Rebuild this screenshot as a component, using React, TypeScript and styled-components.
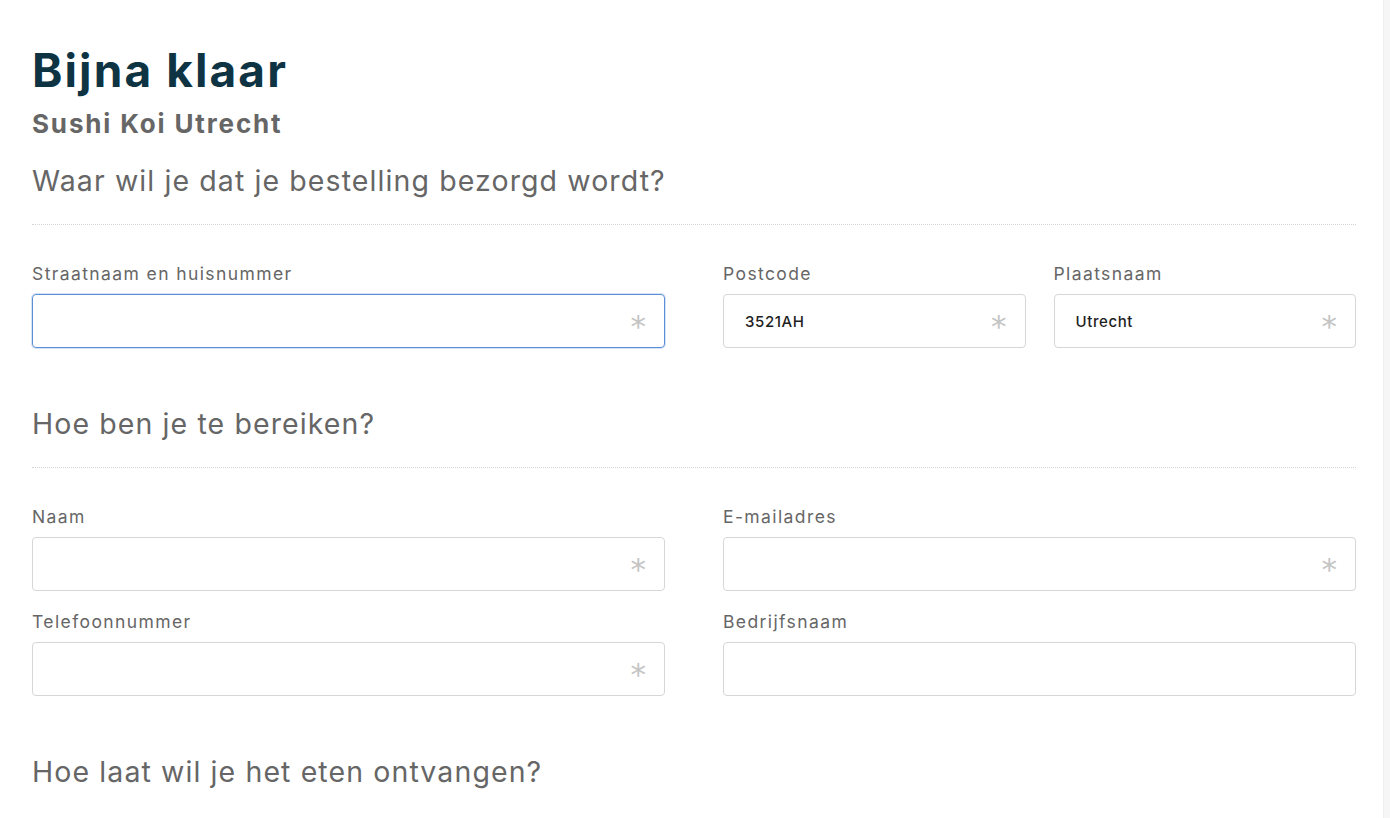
import React from 'react'
import styled, { createGlobalStyle } from 'styled-components'

const GlobalStyle = createGlobalStyle`
  html, body {
    margin: 0;
    padding: 0;
    background: #fff;
  }
  body {
    font-family: Inter, "Open Sans", sans-serif;
    overflow: hidden;
  }
`

const Shell = styled.div`
  display: flex;
  height: 818px;
`

const Main = styled.main`
  flex: 1;
  padding: 40px 27px 0 32px;
`

const ScrollTrack = styled.div`
  width: 6px;
  background: #f6f6f6;
  border-left: 1px solid #f0f0f0;
`

const Title = styled.h1`
  margin: 0;
  font-size: 46px;
  line-height: 60px;
  font-weight: 700;
  color: #0e3443;
  letter-spacing: 2.1px;
`

const Restaurant = styled.h2`
  margin: 8px 0 0;
  font-size: 26px;
  line-height: 32px;
  font-weight: 700;
  color: #666;
  letter-spacing: 1.85px;
`

const SectionTitle = styled.h3<{ $top: number }>`
  margin: ${p => p.$top}px 0 0;
  font-size: 28.5px;
  line-height: 36px;
  font-weight: 400;
  color: #666;
  letter-spacing: 1.1px;
`

const Divider = styled.hr`
  margin: 25px 0 0;
  border: 0;
  border-top: 1px dotted #d4d4d4;
  height: 0;
`

const FormGrid = styled.div<{ $top: number }>`
  display: grid;
  grid-template-columns: 1fr 1fr;
  column-gap: 58px;
  row-gap: 21px;
  margin-top: ${p => p.$top}px;
`

const SubGrid = styled.div`
  display: grid;
  grid-template-columns: 1fr 1fr;
  column-gap: 28px;
`

const Field = styled.label`
  display: flex;
  flex-direction: column;
`

const Label = styled.span`
  font-size: 17.5px;
  line-height: 20px;
  color: #666;
  margin-bottom: 10px;
  letter-spacing: 1.4px;
`

const InputBox = styled.div<{ $focused?: boolean }>`
  position: relative;
  height: 54px;
  box-sizing: border-box;
  border: 1px solid ${p => (p.$focused ? '#5a8fd8' : '#d6d6d6')};
  border-radius: 4px;
  box-shadow: ${p => (p.$focused ? '0 0 0 1px rgba(90,143,216,0.25)' : 'none')};
  display: flex;
  align-items: center;
  padding: 0 18px 0 21px;
`

const Input = styled.input`
  flex: 1;
  border: 0;
  outline: none;
  background: transparent;
  font-family: Inter, "Open Sans", sans-serif;
  font-size: 15px;
  font-weight: 500;
  letter-spacing: 0.6px;
  color: #1e1e1e;
  padding: 0;
  min-width: 0;
`

const Required = styled.span`
  font-family: "DejaVu Sans", sans-serif;
  font-size: 31px;
  line-height: 1;
  color: #c4c4c4;
  margin-top: 11px;
`

type FieldProps = {
  label: string
  value?: string
  required?: boolean
  focused?: boolean
}

const FormField = ({ label, value = '', required, focused }: FieldProps) => (
  <Field>
    <Label>{label}</Label>
    <InputBox $focused={focused}>
      <Input defaultValue={value} />
      {required && <Required>*</Required>}
    </InputBox>
  </Field>
)

export default function App() {
  return (
    <Shell>
      <GlobalStyle />
      <Main>
        <Title>Bijna klaar</Title>
        <Restaurant>Sushi Koi Utrecht</Restaurant>
        <SectionTitle $top={23}>Waar wil je dat je bestelling bezorgd wordt?</SectionTitle>
        <Divider />
        <FormGrid $top={39}>
          <FormField label="Straatnaam en huisnummer" required focused />
          <SubGrid>
            <FormField label="Postcode" value="3521AH" required />
            <FormField label="Plaatsnaam" value="Utrecht" required />
          </SubGrid>
        </FormGrid>
        <SectionTitle $top={58}>Hoe ben je te bereiken?</SectionTitle>
        <Divider />
        <FormGrid $top={39}>
          <FormField label="Naam" required />
          <FormField label="E-mailadres" required />
          <FormField label="Telefoonnummer" required />
          <FormField label="Bedrijfsnaam" />
        </FormGrid>
        <SectionTitle $top={58}>Hoe laat wil je het eten ontvangen?</SectionTitle>
      </Main>
      <ScrollTrack />
    </Shell>
  )
}
